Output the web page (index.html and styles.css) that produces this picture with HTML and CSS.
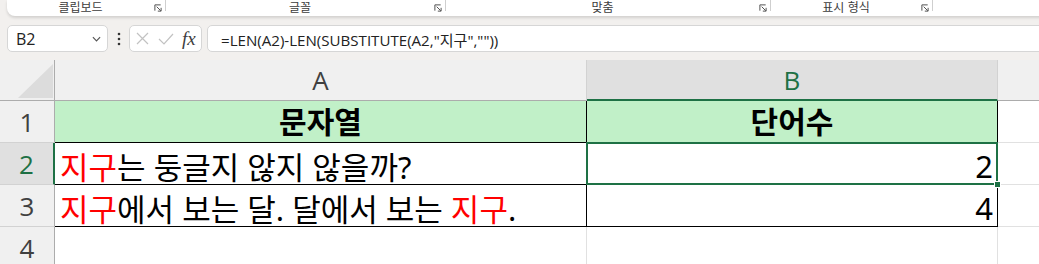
FILE: index.html
```html
<!DOCTYPE html>
<html lang="ko">
<head>
<meta charset="utf-8">
<title>Excel</title>
<link rel="stylesheet" href="styles.css">
</head>
<body>
<div class="ribbon">
  <div class="grp g1"><span class="lbl">클립보드</span><svg class="launch" viewBox="0 0 9 9"><path d="M1 7.5V1h6.5M3 3l4.6 4.6M8 4.3V8H4.3"/></svg><span class="sep"></span></div>
  <div class="grp g2"><span class="lbl">글꼴</span><svg class="launch" viewBox="0 0 9 9"><path d="M1 7.5V1h6.5M3 3l4.6 4.6M8 4.3V8H4.3"/></svg><span class="sep"></span></div>
  <div class="grp g3"><span class="lbl">맞춤</span><svg class="launch" viewBox="0 0 9 9"><path d="M1 7.5V1h6.5M3 3l4.6 4.6M8 4.3V8H4.3"/></svg><span class="sep"></span></div>
  <div class="grp g4"><span class="lbl">표시 형식</span><svg class="launch" viewBox="0 0 9 9"><path d="M1 7.5V1h6.5M3 3l4.6 4.6M8 4.3V8H4.3"/></svg><span class="sep"></span></div>
</div>

<div class="fbar">
  <div class="namebox"><span class="nm">B2</span><svg class="chev" viewBox="0 0 10 6"><path d="M1 1l4 4 4-4"/></svg></div>
  <div class="dots"><svg viewBox="0 0 4 14"><circle cx="2" cy="2" r="1.3"/><circle cx="2" cy="7" r="1.3"/><circle cx="2" cy="12" r="1.3"/></svg></div>
  <div class="fxbox">
    <svg class="ico x" viewBox="0 0 13 13"><path d="M1 1l11 11M12 1L1 12"/></svg>
    <svg class="ico ck" viewBox="0 0 16 12"><path d="M1 6l5 5L15 1"/></svg>
    <span class="fx">fx</span>
  </div>
  <div class="formula"><span>=LEN(A2)-LEN(SUBSTITUTE(A2,"지구",""))</span></div>
</div>

<div class="sheet">
  <div class="corner"><svg viewBox="0 0 35 34"><path d="M35 0V34H0z"/></svg></div>
  <div class="ch">A</div>
  <div class="ch chsel">B</div>
  <div class="ch chc"></div>

  <div class="rh">1</div>
  <div class="cell head bl"><span>문자열</span></div>
  <div class="cell head bl"><span>단어수</span></div>
  <div class="cell gc"></div>

  <div class="rh rhsel">2</div>
  <div class="cell bl"><span class="txt"><span class="red">지구</span>는 둥글지 않지 않을까?</span></div>
  <div class="cell bl num sel"><span>2</span><span class="handle"></span></div>
  <div class="cell gc"></div>

  <div class="rh">3</div>
  <div class="cell bl"><span class="txt"><span class="red">지구</span>에서 보는 달. 달에서 보는 <span class="red">지구</span>.</span></div>
  <div class="cell bl num"><span>4</span></div>
  <div class="cell gc"></div>

  <div class="rh">4</div>
  <div class="cell g"></div>
  <div class="cell g"></div>
  <div class="cell gc"></div>
</div>
</body>
</html>
```

FILE: styles.css
```css
html, body {
  margin: 0;
  padding: 0;
}
body {
  width: 1039px;
  height: 264px;
  overflow: hidden;
  background: #f2f0ee;
  font-family: "Noto Sans", "Noto Sans CJK KR", sans-serif;
}

/* ribbon */
.ribbon {
  display: flex;
  height: 16px;
  margin-left: 7px;
  margin-right: -20px;
  background: #ffffff;
  border-bottom-left-radius: 8px;
  box-shadow: 0 2px 3px rgba(0, 0, 0, 0.13);
}
.grp {
  display: flex;
  align-items: flex-start;
  height: 16px;
}
.g1 { width: 159px; }
.g2 { width: 280px; }
.g3 { width: 325px; }
.g4 { width: 162px; }
.lbl {
  flex: 1;
  text-align: center;
  font-family: "Noto Sans CJK KR", sans-serif;
  font-size: 12px;
  line-height: 13px;
  color: #3c3c3c;
}
.launch {
  width: 8px;
  height: 8px;
  margin-top: 4px;
  fill: none;
  stroke: #505050;
  stroke-width: 1.1;
}
.sep {
  width: 1px;
  height: 11px;
  margin-left: 3px;
  background: #cfcfcf;
}

/* formula bar */
.fbar {
  display: flex;
  height: 27px;
  margin-top: 9px;
  padding-left: 7px;
}
.namebox {
  box-sizing: border-box;
  width: 101px;
  display: flex;
  align-items: center;
  justify-content: space-between;
  padding: 0 6px 0 8px;
  background: #ffffff;
  border: 1px solid #d6d6d6;
  border-radius: 5px;
}
.nm {
  font-family: "Open Sans", sans-serif;
  font-size: 16px;
  color: #222;
}
.chev {
  width: 9px;
  height: 6px;
  fill: none;
  stroke: #555;
  stroke-width: 1.3;
}
.dots {
  width: 21px;
  display: flex;
  align-items: center;
  justify-content: center;
}
.dots svg {
  width: 4px;
  height: 14px;
  fill: #333;
}
.fxbox {
  box-sizing: border-box;
  width: 73px;
  display: flex;
  align-items: center;
  padding-left: 6px;
  background: #ffffff;
  border: 1px solid #d6d6d6;
  border-radius: 5px;
}
.ico {
  fill: none;
  stroke: #c2c2c2;
  stroke-width: 1.2;
}
.x { width: 13px; height: 13px; }
.ck { width: 16px; height: 12px; margin-left: 9px; }
.fx {
  margin-left: 8px;
  font-family: "Liberation Serif", serif;
  font-style: italic;
  font-size: 19px;
  line-height: 20px;
  color: #3d3d3d;
}
.formula {
  box-sizing: border-box;
  flex: 1;
  margin-left: 5px;
  margin-right: -10px;
  padding-left: 13px;
  display: flex;
  align-items: center;
  background: #ffffff;
  border: 1px solid #d6d6d6;
  border-radius: 5px;
  font-family: "Open Sans", "Noto Sans CJK KR", sans-serif;
  font-size: 15.1px;
  color: #222;
}

/* sheet */
.sheet {
  display: grid;
  grid-template-columns: 55px 532px 411px 1fr;
  grid-template-rows: 41px repeat(4, 42px);
  margin-top: 8px;
  background: #ffffff;
}
.sheet > div {
  box-sizing: border-box;
}
.corner {
  background: #f0f0f0;
  border-right: 1px solid #acacac;
  border-bottom: 1px solid #acacac;
  padding: 4px 0 0 18px;
}
.corner svg {
  display: block;
  width: 35px;
  height: 34px;
  fill: #dcdcdc;
}
.ch {
  display: flex;
  align-items: center;
  justify-content: center;
  background: #f0f0f0;
  border-right: 1px solid #d2d2d2;
  border-bottom: 1px solid #acacac;
  font-family: "Open Sans", sans-serif;
  font-size: 26px;
  color: #404040;
}
.chsel {
  background: #e0e0e0;
  color: #1e7145;
  border-bottom: 2px solid #1e7145;
}
.chc {
  border-right: none;
}
.rh {
  display: flex;
  align-items: center;
  justify-content: center;
  background: #f0f0f0;
  border-right: 1px solid #acacac;
  border-bottom: 1px solid #d2d2d2;
  font-family: "Open Sans", sans-serif;
  font-size: 26px;
  color: #404040;
}
.rhsel {
  background: #e0e0e0;
  color: #1e7145;
  border-right: 2px solid #1e7145;
}
.cell {
  position: relative;
  display: flex;
  align-items: center;
  padding: 6px 5px 0 5px;
  font-size: 31px;
  line-height: 36px;
  color: #000000;
  white-space: nowrap;
}
.bl {
  border-right: 1px solid #000000;
  border-bottom: 1px solid #000000;
}
.g {
  border-right: 1px solid #e1e1e1;
  border-bottom: 1px solid #e1e1e1;
}
.gc {
  border-bottom: 1px solid #e1e1e1;
}
.head {
  justify-content: center;
  padding-top: 0;
  background: #c1f0c8;
  font-weight: bold;
  font-size: 30px;
}
.num {
  justify-content: flex-end;
  padding-right: 4px;
  padding-top: 4px;
}
.red {
  color: #ff0000;
}
.sel::after {
  content: "";
  position: absolute;
  left: -1px;
  top: -1px;
  right: -1px;
  bottom: -1px;
  border: 2px solid #1e7145;
  pointer-events: none;
}
.handle {
  position: absolute;
  right: -4px;
  bottom: -4px;
  width: 5px;
  height: 5px;
  background: #1e7145;
  border: 1px solid #ffffff;
  z-index: 2;
}
```
